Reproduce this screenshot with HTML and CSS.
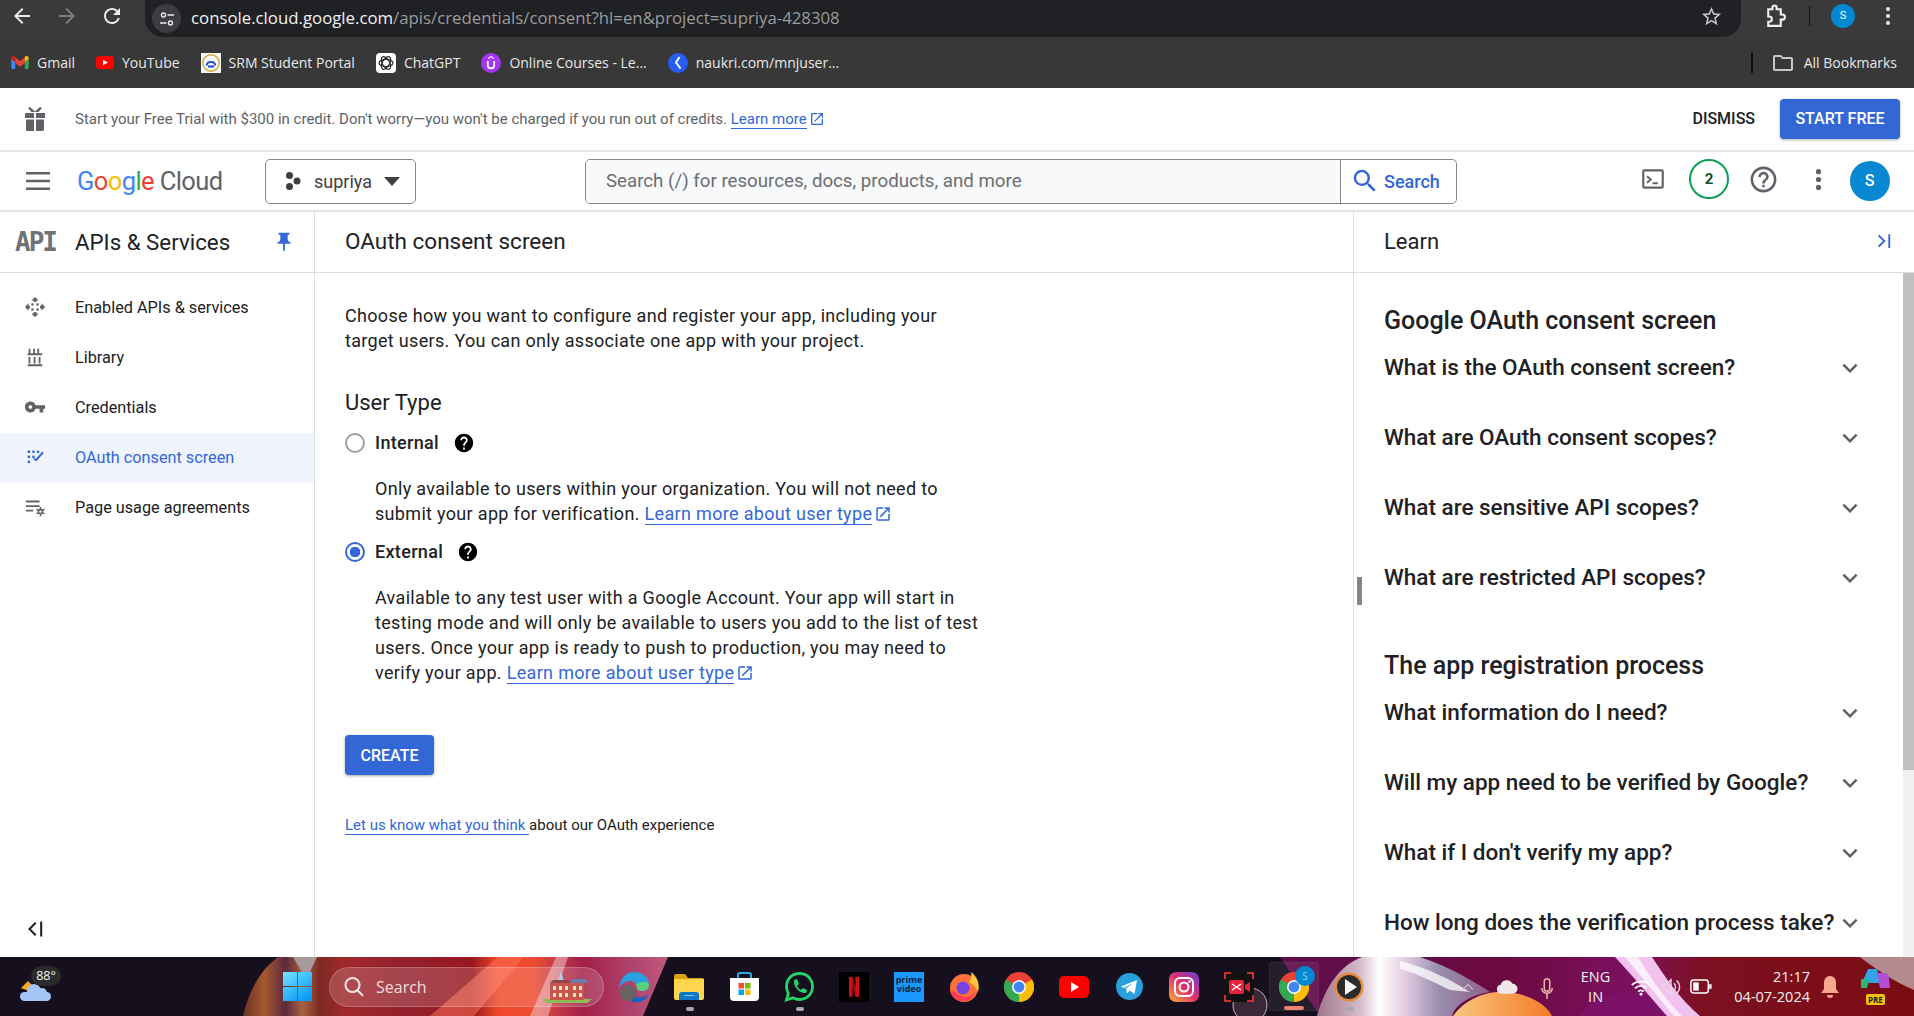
FILE: index.html
```html
<!DOCTYPE html>
<html lang="en">
<head>
    <meta charset="UTF-8">
    <title>OAuth consent screen</title>
    <link rel="stylesheet" href="styles.css">
</head>
<body>
    <!-- browser chrome -->
    <div class="toolbar">
        <svg class="nav-icon nav-first" viewBox="0 0 24 24"><path fill="#e8eaed" d="M20 11H7.83l5.59-5.59L12 4l-8 8 8 8 1.41-1.41L7.83 13H20v-2z"/></svg>
        <svg class="nav-icon" viewBox="0 0 24 24"><path fill="#7d7e80" d="M12 4l-1.41 1.41L16.17 11H4v2h12.17l-5.58 5.59L12 20l8-8z"/></svg>
        <svg class="nav-icon" viewBox="0 0 24 24"><path fill="#e8eaed" d="M17.65 6.35A7.958 7.958 0 0012 4c-4.42 0-7.99 3.58-7.99 8s3.57 8 7.99 8c3.73 0 6.84-2.55 7.73-6h-2.08A5.99 5.99 0 0112 18c-3.31 0-6-2.69-6-6s2.69-6 6-6c1.66 0 3.14.69 4.22 1.78L13 11h7V4l-2.35 2.35z"/></svg>
        <div class="urlbar">
            <span class="site-info">
                <svg viewBox="0 0 16 16" width="16" height="16"><g fill="none" stroke="#e8eaed" stroke-width="1.4"><circle cx="4.5" cy="4" r="2"/><path d="M8.5 4H15M1 12h6.500"/><circle cx="11.5" cy="12" r="2"/></g></svg>
            </span>
            <span class="url"><span class="url-host">console.cloud.google.com</span>/apis/credentials/consent?hl=en&amp;project=supriya-428308</span>
            <svg class="star" viewBox="0 0 24 24"><path fill="#c4c7c5" d="M22 9.24l-7.19-.62L12 2 9.19 8.63 2 9.24l5.46 4.73L5.82 21 12 17.27 18.18 21l-1.63-7.03L22 9.24zM12 15.4l-3.76 2.27 1-4.28-3.32-2.88 4.38-.38L12 6.1l1.71 4.04 4.38.38-3.32 2.88 1 4.28L12 15.4z"/></svg>
        </div>
        <div class="toolbar-right">
            <svg class="ext-icon" viewBox="0 0 24 24"><path fill="none" stroke="#f1f1f1" stroke-width="2" d="M6 5h4V3.500a2 2 0 014 0V5h4v5h1.500a2.500 2.500 0 010 5H18v6H6v-4h1a2.500 2.500 0 000-5H6z"/></svg>
            <span class="toolbar-sep"></span>
            <span class="chrome-avatar">S</span>
            <svg class="chrome-more" viewBox="0 0 24 24"><g fill="#e8eaed"><circle cx="12" cy="5" r="2"/><circle cx="12" cy="12" r="2"/><circle cx="12" cy="19" r="2"/></g></svg>
        </div>
    </div>
    <div class="bookmarks">
        <div class="bm">
            <svg viewBox="0 0 20 15" width="18" height="13"><path fill="#4285f4" d="M0 3v10.500C0 14.300.6 15 1.500 15H4.500V7z"/><path fill="#34a853" d="M15.500 15h3c.9 0 1.500-.7 1.500-1.500V3l-4.500 4z"/><path fill="#ea4335" d="M4.500 8V1.500L10 6l5.500-4.500V8L10 12.500z"/><path fill="#c5221f" d="M0 3.500V2.500C0 .5 2.300-.6 3.900.6L4.500 1.100V7z"/><path fill="#fbbc04" d="M15.500 1.100l.6-.5C17.700-.6 20 .5 20 2.500v1L15.500 7z"/></svg>
            Gmail
        </div>
        <div class="bm">
            <svg viewBox="0 0 18 13" width="18" height="13"><rect width="18" height="13" rx="3.500" fill="#f00"/><path fill="#fff" d="M7 3.800l5 2.700-5 2.700z"/></svg>
            YouTube
        </div>
        <div class="bm">
            <svg viewBox="0 0 20 20" width="20" height="20"><rect width="20" height="20" fill="#f8f8f2"/><circle cx="10" cy="10" r="8.200" fill="none" stroke="#c9a93c" stroke-width="1.400"/><path fill="none" stroke="#1646d8" stroke-width="1.800" d="M5.500 12.500a4.600 4.600 0 019 0M7 13.500h6"/></svg>
            SRM Student Portal
        </div>
        <div class="bm">
            <svg viewBox="0 0 20 20" width="20" height="20"><rect width="20" height="20" rx="4" fill="#fff"/><g fill="none" stroke="#222" stroke-width="1.100"><ellipse cx="10" cy="10" rx="7" ry="3.600"/><ellipse cx="10" cy="10" rx="7" ry="3.600" transform="rotate(60 10 10)"/><ellipse cx="10" cy="10" rx="7" ry="3.600" transform="rotate(-60 10 10)"/></g></svg>
            ChatGPT
        </div>
        <div class="bm">
            <svg viewBox="0 0 20 20" width="20" height="20"><circle cx="10" cy="10" r="10" fill="#a435f0"/><path fill="none" stroke="#fff" stroke-width="1.800" d="M6.800 8v4.200a3.200 3.200 0 006.400 0V8"/><path fill="#fff" d="M10 3l3 2v1.300l-3-2-3 2V5z"/></svg>
            Online Courses - Le...
        </div>
        <div class="bm">
            <svg viewBox="0 0 20 20" width="20" height="20"><circle cx="10" cy="10" r="10" fill="#275df5"/><path fill="none" stroke="#fff" stroke-width="2" d="M11.500 4L8 9.500l4.500 6"/></svg>
            naukri.com/mnjuser...
        </div>
        <div class="all-bookmarks">
            <span class="bm-sep"></span>
            <svg viewBox="0 0 24 24" width="24" height="24"><path fill="#c7c7c7" d="M20 6h-8l-2-2H4c-1.100 0-1.990.9-1.990 2L2 18c0 1.100.9 2 2 2h16c1.100 0 2-.9 2-2V8c0-1.100-.9-2-2-2zm0 12H4V6h5.170l2 2H20v10z"/></svg>
            <span>All Bookmarks</span>
        </div>
    </div>

    <!-- free trial banner -->
    <div class="trial">
        <svg class="gift" viewBox="0 0 22 24"><path fill="#5f6368" d="M1 6h9v5H1zM12 6h9v5h-9zM2 12.500h8V24H3.500A1.500 1.500 0 012 22.500zM12 12.500h8v10a1.500 1.500 0 01-1.500 1.500H12zM4 1l2-1 5 4.500L16 0l2 1-3.500 4h-7z"/></svg>
        <p class="trial-text">Start your Free Trial with $300 in credit. Don't worry—you won't be charged if you run out of credits. <a class="link">Learn more</a><svg class="ext-link small" viewBox="0 0 24 24"><path d="M19 19H5V5h7V3H5a2 2 0 00-2 2v14a2 2 0 002 2h14c1.100 0 2-.9 2-2v-7h-2v7zM14 3v2h3.590l-9.830 9.830 1.410 1.410L19 6.410V10h2V3h-7z"/></svg></p>
        <span class="dismiss">DISMISS</span>
        <button class="btn-primary start-free">START FREE</button>
    </div>

    <!-- console header -->
    <div class="topbar">
        <svg class="menu-icon" viewBox="0 0 24 18"><path fill="#5f6368" d="M0 0h24v2.400H0zM0 7.800h24v2.400H0zM0 15.600h24V18H0z"/></svg>
        <div class="logo"><span class="g-blue">G</span><span class="g-red">o</span><span class="g-yellow">o</span><span class="g-blue">g</span><span class="g-green">l</span><span class="g-red">e</span> <span class="logo-cloud">Cloud</span></div>
        <div class="picker">
            <svg viewBox="0 0 18 20" width="18" height="20"><g fill="#3c4043"><circle cx="5.500" cy="4.500" r="3.500"/><circle cx="13" cy="10" r="3.500"/><circle cx="5.500" cy="15.500" r="3.500"/></g></svg>
            <span>supriya</span>
            <span class="caret"></span>
        </div>
        <div class="search">
            <span class="search-input">Search (/) for resources, docs, products, and more</span>
            <span class="search-btn">
                <svg viewBox="0 0 24 24" width="30" height="30"><path fill="#3367d6" d="M15.500 14h-.79l-.28-.27A6.471 6.471 0 0016 9.500 6.500 6.500 0 109.500 16c1.610 0 3.090-.59 4.230-1.570l.27.280v.79l5 4.990L20.490 19l-4.990-5zm-6 0C7.010 14 5 11.990 5 9.500S7.010 5 9.500 5 14 7.010 14 9.500 11.990 14 9.500 14z"/></svg>
                Search
            </span>
        </div>
        <div class="top-icons">
            <svg class="icon-terminal" viewBox="0 0 24 24"><path fill="#5f6368" d="M20 3H4a2 2 0 00-2 2v14a2 2 0 002 2h16a2 2 0 002-2V5a2 2 0 00-2-2zm0 16H4V5h16v14z"/><path fill="none" stroke="#5f6368" stroke-width="1.800" d="M6.500 9.500l3.500 3-3.500 3M11.500 16h5"/></svg>
            <span class="badge">2</span>
            <svg class="icon-help" viewBox="0 0 24 24"><path fill="#5f6368" d="M11 18h2v-2h-2v2zm1-16C6.480 2 2 6.480 2 12s4.480 10 10 10 10-4.480 10-10S17.520 2 12 2zm0 18c-4.410 0-8-3.590-8-8s3.590-8 8-8 8 3.590 8 8-3.590 8-8 8zm0-14c-2.210 0-4 1.790-4 4h2c0-1.100.9-2 2-2s2 .9 2 2c0 2-3 1.750-3 5h2c0-2.250 3-2.500 3-5 0-2.210-1.790-4-4-4z"/></svg>
            <svg class="icon-more" viewBox="0 0 24 24"><g fill="#5f6368"><circle cx="12" cy="5" r="2.300"/><circle cx="12" cy="12" r="2.300"/><circle cx="12" cy="19" r="2.300"/></g></svg>
            <span class="avatar">S</span>
        </div>
    </div>

    <div class="workspace">
        <!-- left nav -->
        <aside class="sidebar">
            <div class="side-head">
                <span class="api-mark">API</span>
                <span class="side-title">APIs &amp; Services</span>
                <svg class="pin" viewBox="0 0 24 24"><path fill="#3367d6" d="M16 9V4h1c.55 0 1-.45 1-1s-.45-1-1-1H7c-.55 0-1 .45-1 1s.45 1 1 1h1v5c0 1.660-1.340 3-3 3v2h5.970v7l1 1 1-1v-7H19v-2c-1.660 0-3-1.340-3-3z"/></svg>
            </div>
            <nav class="side-nav">
                <a class="side-item">
                    <svg viewBox="0 0 24 24"><g fill="#5f6368"><path d="M12 1l4 4h-2.500v1.500h-3V5H8zM12 23l-4-4h2.500v-1.500h3V19H16zM1 12l4-4v2.500h1.500v3H5V16zM23 12l-4 4v-2.500h-1.500v-3H19V8z"/><rect x="8" y="8" width="2.500" height="2.500"/><rect x="13.500" y="8" width="2.500" height="2.500"/><rect x="8" y="13.500" width="2.500" height="2.500"/><rect x="13.500" y="13.500" width="2.500" height="2.500"/></g></svg>
                    Enabled APIs &amp; services
                </a>
                <a class="side-item">
                    <svg viewBox="0 0 24 24"><path fill="#5f6368" d="M5 3h2v5h3V3h2v5h2.500V3h2v5H20v2H4V8h1zM4 20h16v2H4zM5 12h2v7H5zM10.500 12h2v7h-2zM16 12h2v7h-2z"/></svg>
                    Library
                </a>
                <a class="side-item">
                    <svg viewBox="0 0 24 24"><path fill="#5f6368" d="M12.650 10C11.830 7.670 9.610 6 7 6c-3.310 0-6 2.690-6 6s2.690 6 6 6c2.610 0 4.830-1.670 5.650-4H17v4h4v-4h2v-4H12.650zM7 14c-1.100 0-2-.9-2-2s.9-2 2-2 2 .9 2 2-.9 2-2 2z"/></svg>
                    Credentials
                </a>
                <a class="side-item active">
                    <svg viewBox="0 0 24 24"><g fill="#3367d6"><rect x="4" y="5" width="2.600" height="2.600"/><rect x="9" y="5" width="2.600" height="2.600"/><rect x="14" y="5" width="2.600" height="2.600"/><rect x="4" y="10.500" width="2.600" height="2.600"/><rect x="9" y="10.500" width="2.600" height="2.600"/><rect x="4" y="16" width="2.600" height="2.600"/><path d="M20 6l1.500 1.500-8 9-3.500-2 1-1.500 2 1z"/></g></svg>
                    OAuth consent screen
                </a>
                <a class="side-item">
                    <svg viewBox="0 0 24 24"><g fill="#5f6368"><path d="M2 5h15v2H2zM2 10h15v2H2zM2 15h8v2H2z"/><circle cx="18" cy="17" r="3"/><path fill="none" stroke="#5f6368" stroke-width="1.800" d="M18 12v10M13.700 14.500l8.600 5M13.700 19.500l8.600-5"/></g><circle cx="18" cy="17" r="1.300" fill="#fff"/></svg>
                    Page usage agreements
                </a>
            </nav>
            <svg class="collapse" viewBox="0 0 16 16"><path fill="none" stroke="#202124" stroke-width="1.500" d="M8.500 3.500L4 8l4.500 4.500M12.500 2.500v11"/></svg>
        </aside>

        <!-- main column -->
        <main class="content">
            <div class="page-head">OAuth consent screen</div>
            <div class="page-body">
                <p class="intro">Choose how you want to configure and register your app, including your target users. You can only associate one app with your project.</p>
                <h2 class="section-label">User Type</h2>

                <div class="radio-row">
                    <span class="radio"></span>
                    <span class="radio-label">Internal</span>
                    <svg class="help" viewBox="0 0 24 24"><path d="M12 2C6.480 2 2 6.480 2 12s4.480 10 10 10 10-4.480 10-10S17.520 2 12 2zm1 17h-2v-2h2v2zm2.070-7.750l-.9.920C13.450 12.900 13 13.500 13 15h-2v-.5c0-1.100.450-2.100 1.170-2.830l1.240-1.260c.370-.36.590-.86.590-1.410 0-1.100-.9-2-2-2s-2 .9-2 2H8c0-2.210 1.790-4 4-4s4 1.790 4 4c0 .880-.36 1.680-.93 2.250z"/></svg>
                </div>
                <p class="radio-desc">Only available to users within your organization. You will not need to submit your app for verification. <a class="link">Learn more about user type</a><svg class="ext-link" viewBox="0 0 24 24"><path d="M19 19H5V5h7V3H5a2 2 0 00-2 2v14a2 2 0 002 2h14c1.100 0 2-.9 2-2v-7h-2v7zM14 3v2h3.590l-9.830 9.830 1.410 1.410L19 6.410V10h2V3h-7z"/></svg></p>

                <div class="radio-row">
                    <span class="radio checked"></span>
                    <span class="radio-label">External</span>
                    <svg class="help" viewBox="0 0 24 24"><path d="M12 2C6.480 2 2 6.480 2 12s4.480 10 10 10 10-4.480 10-10S17.520 2 12 2zm1 17h-2v-2h2v2zm2.070-7.750l-.9.920C13.450 12.900 13 13.500 13 15h-2v-.5c0-1.100.450-2.100 1.170-2.830l1.240-1.260c.370-.36.590-.86.590-1.410 0-1.100-.9-2-2-2s-2 .9-2 2H8c0-2.210 1.790-4 4-4s4 1.790 4 4c0 .880-.36 1.680-.93 2.250z"/></svg>
                </div>
                <p class="radio-desc">Available to any test user with a Google Account. Your app will start in testing mode and will only be available to users you add to the list of test users. Once your app is ready to push to production, you may need to verify your app. <a class="link">Learn more about user type</a><svg class="ext-link" viewBox="0 0 24 24"><path d="M19 19H5V5h7V3H5a2 2 0 00-2 2v14a2 2 0 002 2h14c1.100 0 2-.9 2-2v-7h-2v7zM14 3v2h3.590l-9.830 9.830 1.410 1.410L19 6.410V10h2V3h-7z"/></svg></p>

                <button class="btn-primary create">CREATE</button>
                <p class="feedback"><a class="link">Let us know what you think </a>about our OAuth experience</p>
            </div>
        </main>

        <!-- learn panel -->
        <aside class="learn">
            <span class="drag-handle"></span>
            <div class="learn-head">
                <span>Learn</span>
                <svg viewBox="0 0 16 16" width="20" height="20"><path fill="none" stroke="#3367d6" stroke-width="1.500" d="M4.500 3.500L9 8l-4.500 4.500M13 2.500v11"/></svg>
            </div>
            <div class="learn-scroll">
                <div class="learn-body">
                    <h3 class="learn-title">Google OAuth consent screen</h3>
                    <div class="faq">What is the OAuth consent screen?<svg viewBox="0 0 24 24"><path d="M16.590 8.590L12 13.170 7.410 8.590 6 10l6 6 6-6z"/></svg></div>
                    <div class="faq">What are OAuth consent scopes?<svg viewBox="0 0 24 24"><path d="M16.590 8.590L12 13.170 7.410 8.590 6 10l6 6 6-6z"/></svg></div>
                    <div class="faq">What are sensitive API scopes?<svg viewBox="0 0 24 24"><path d="M16.590 8.590L12 13.170 7.410 8.590 6 10l6 6 6-6z"/></svg></div>
                    <div class="faq">What are restricted API scopes?<svg viewBox="0 0 24 24"><path d="M16.590 8.590L12 13.170 7.410 8.590 6 10l6 6 6-6z"/></svg></div>
                    <h3 class="learn-title second">The app registration process</h3>
                    <div class="faq">What information do I need?<svg viewBox="0 0 24 24"><path d="M16.590 8.590L12 13.170 7.410 8.590 6 10l6 6 6-6z"/></svg></div>
                    <div class="faq">Will my app need to be verified by Google?<svg viewBox="0 0 24 24"><path d="M16.590 8.590L12 13.170 7.410 8.590 6 10l6 6 6-6z"/></svg></div>
                    <div class="faq">What if I don't verify my app?<svg viewBox="0 0 24 24"><path d="M16.590 8.590L12 13.170 7.410 8.590 6 10l6 6 6-6z"/></svg></div>
                    <div class="faq">How long does the verification process take?<svg viewBox="0 0 24 24"><path d="M16.590 8.590L12 13.170 7.410 8.590 6 10l6 6 6-6z"/></svg></div>
                </div>
                <div class="scrollbar"><span class="scroll-thumb"></span></div>
            </div>
        </aside>
    </div>

    <!-- windows taskbar -->
    <footer class="taskbar">
        <svg class="wallpaper" viewBox="0 0 1914 59">
            <defs>
                <linearGradient id="redwall" gradientUnits="userSpaceOnUse" x1="243" y1="0" x2="668" y2="0">
                    <stop offset="0" stop-color="#6a3220"/>
                    <stop offset=".05" stop-color="#a5572f"/>
                    <stop offset=".1" stop-color="#5c2a3d"/>
                    <stop offset=".14" stop-color="#a8623f"/>
                    <stop offset=".18" stop-color="#7d2a24"/>
                    <stop offset=".24" stop-color="#a0282c"/>
                    <stop offset=".38" stop-color="#93202c"/>
                    <stop offset=".54" stop-color="#991820"/>
                    <stop offset=".6" stop-color="#f0482a"/>
                    <stop offset=".68" stop-color="#ee4c30"/>
                    <stop offset=".74" stop-color="#c23a48"/>
                    <stop offset=".8" stop-color="#a21f48"/>
                    <stop offset=".9" stop-color="#ad3f68"/>
                    <stop offset="1" stop-color="#bf5a80"/>
                </linearGradient>
                <linearGradient id="traywall" gradientUnits="userSpaceOnUse" x1="1280" y1="0" x2="1914" y2="0">
                    <stop offset="0" stop-color="#5e0e4c"/>
                    <stop offset=".35" stop-color="#6b0a3f"/>
                    <stop offset=".55" stop-color="#7c1060"/>
                    <stop offset=".67" stop-color="#7d1020"/>
                    <stop offset="1" stop-color="#7a0c12"/>
                </linearGradient>
                <linearGradient id="pearl" gradientUnits="userSpaceOnUse" x1="1317" y1="0" x2="1490" y2="0">
                    <stop offset="0" stop-color="#9e7688"/>
                    <stop offset=".25" stop-color="#d5bccb"/>
                    <stop offset=".36" stop-color="#fff"/>
                    <stop offset=".5" stop-color="#e8cfe4"/>
                    <stop offset=".7" stop-color="#9a8fb0"/>
                    <stop offset="1" stop-color="#8d5f8a"/>
                </linearGradient>
                <linearGradient id="dome" x1="0" y1="0" x2="1" y2="0">
                    <stop offset="0" stop-color="#f8c67e"/>
                    <stop offset="1" stop-color="#f37a2a"/>
                </linearGradient>
                <linearGradient id="startblue" gradientUnits="userSpaceOnUse" x1="0" y1="0" x2="20" y2="29">
                    <stop offset="0" stop-color="#72e4ff"/>
                    <stop offset="1" stop-color="#0c9af5"/>
                </linearGradient>
                <linearGradient id="insta" x1="0" y1="1" x2="1" y2="0">
                    <stop offset="0" stop-color="#fbb03b"/>
                    <stop offset=".5" stop-color="#e1306c"/>
                    <stop offset="1" stop-color="#6a3fd7"/>
                </linearGradient>
            </defs>
            <path fill="url(#redwall)" d="M243 59C250 30 262 12 278 0H668L643 59z"/>
            <path fill="#ff7058" opacity=".55" d="M430 59L498 0h26L474 59z"/>
            <path fill="#f0c4c8" opacity=".55" d="M530 59L556 0h12L548 59z"/>
            <path fill="#a89a9a" d="M293 0h24l-8 17h-6z"/>
            <path fill="url(#traywall)" d="M1280 0L1320 59H1914V0z"/>
            <path fill="url(#pearl)" d="M1317 59C1325 30 1340 8 1362 0H1420C1450 10 1475 25 1490 35 1470 38 1455 48 1452 59z"/>
            <path fill="#fff" opacity=".75" d="M1400 4C1425 10 1450 22 1470 35L1450 33C1432 24 1415 16 1400 12z"/>
            <path fill="url(#dome)" d="M1453 59C1465 42 1485 35 1500 35 1525 35 1545 45 1552 59z"/>
            <path fill="#7c1268" d="M1580 59C1590 42 1610 35 1630 35 1660 35 1680 45 1695 59z"/>
            <path fill="#f1c2ee" d="M1615 0H1652C1665 20 1680 42 1700 59H1667C1650 40 1632 18 1615 0z"/>
            <path fill="#fff" opacity=".7" d="M1625 0H1638C1650 20 1665 42 1682 59H1674C1658 40 1640 18 1625 0z"/>
            <path fill="#b58a8e" d="M1860 0H1914V33C1895 25 1875 12 1860 0z"/>
            <circle cx="1250" cy="48" r="17" fill="#3a2838" stroke="#c9b7c4"/>
        </svg>
        <div class="weather">
            <svg viewBox="0 0 32 21" width="32" height="21"><path fill="#f7a823" d="M1 8l7-7 5 5-4 5z"/><g fill="#a4c6f6"><rect y="12" width="31" height="9" rx="4.500"/><circle cx="14" cy="11" r="7"/><circle cx="22" cy="13" r="5"/></g></svg>
            <span class="temp">88°</span>
        </div>
        <div class="task-apps">
            <span class="app"><svg viewBox="0 0 29 29" width="29" height="29"><g fill="url(#startblue)"><rect width="14" height="14"/><rect x="15" width="14" height="14"/><rect y="15" width="14" height="14"/><rect x="15" y="15" width="14" height="14"/></g></svg></span>
            <div class="task-search">
                <svg viewBox="0 0 24 24" width="24" height="24"><path fill="#f2e4e4" d="M10.500 2a8 8 0 016.200 13l5 5-1.400 1.400-5-5A8 8 0 1110.500 2zm0 2a6 6 0 100 12 6 6 0 000-12z"/></svg>
                <span>Search</span>
                <svg viewBox="0 0 50 32" width="50" height="32"><path fill="#8dbb55" d="M0 28h50l-5 4H5z"/><rect x="8" y="12" width="34" height="17" fill="#c9554c"/><path fill="#6b7ab0" d="M28 12l2-4h14l2 4z"/><path fill="#8c4a4a" d="M8 12l3-3h16l2 3z"/><path fill="#b9c8ea" d="M19 0l2.500 9h-5z"/><g fill="#f2dfc6"><rect x="11" y="15" width="3" height="4"/><rect x="17" y="15" width="3" height="4"/><rect x="23" y="15" width="3" height="4"/><rect x="31" y="15" width="3" height="4"/><rect x="37" y="15" width="3" height="4"/><rect x="11" y="22" width="3" height="4"/><rect x="17" y="22" width="3" height="4"/><rect x="23" y="22" width="3" height="4"/><rect x="31" y="22" width="3" height="4"/><rect x="37" y="22" width="3" height="4"/></g></svg>
            </div>
            <span class="app"><svg viewBox="0 0 30 30" width="30" height="30"><path fill="#2a9fe0" d="M15 0c9 0 15 6 15 13 0 4-3 6-7 6-3 0-5-1-5-3 0-4-3-7-6-7-6 0-10 3-12 8C1 6 7 0 15 0z"/><path fill="#56d27a" d="M30 13c0 4-3 6-7 6-3 0-5-1-5-3 0-2-1-3-1-4 6-3 13-3 13 1z"/><path fill="#1363c6" d="M12 30c8 2 14-1 17-7-5 3-10 3-14 1-2 2-3 4-3 6z"/><circle cx="9" cy="21" r="8" fill="#6a6460"/></svg></span>
            <span class="app running"><svg viewBox="0 0 30 26" width="30" height="26"><path fill="#dba40c" d="M0 2a2 2 0 012-2h9l3 4h14a2 2 0 012 2v4H0z"/><path fill="#fdd54f" d="M0 5h30v19a2 2 0 01-2 2H2a2 2 0 01-2-2z"/><path fill="#0d78c8" d="M5 26v-5a3 3 0 013-3h14a3 3 0 013 3v5z"/><rect x="10" y="21" width="10" height="1" fill="#7fc4ee"/></svg></span>
            <span class="app"><svg viewBox="0 0 29 29" width="29" height="29"><path fill="#fff" d="M0 6h29v19a4 4 0 01-4 4H4a4 4 0 01-4-4z"/><path fill="none" stroke="#2ea8e0" stroke-width="2" d="M8 6V3a2 2 0 012-2h9a2 2 0 012 2v3"/><rect x="8.500" y="11" width="5.500" height="5.500" fill="#f25022"/><rect x="15" y="11" width="5.500" height="5.500" fill="#7fba00"/><rect x="8.500" y="17.500" width="5.500" height="5.500" fill="#00a4ef"/><rect x="15" y="17.500" width="5.500" height="5.500" fill="#ffb900"/></svg></span>
            <span class="app running"><svg viewBox="0 0 30 30" width="30" height="30"><path fill="none" stroke="#25d366" stroke-width="2.800" d="M15.500 1.500c7.500 0 13 5.500 13 13s-5.500 13-13 13c-2.500 0-4.500-.6-6.500-1.700l-6.500 2 1.800-6.300c-1.100-2-1.800-4.500-1.800-7 0-7.500 5.500-13 13-13z"/><path fill="#25d366" d="M10 8l3-1 2 5-2 2c1 2 2 3 4 4l2-2 4 2-1 3c-6 1-13-6-12-13z"/></svg></span>
            <span class="app"><svg viewBox="0 0 30 30" width="30" height="30"><rect width="30" height="30" fill="#000"/><path fill="#7f0a10" d="M10 5h3.500l6.500 20h-3.500z"/><path fill="#d40a14" d="M10 5h3.500v19.500L10 25zM16.500 5H20v20l-3.500-.5z"/></svg></span>
            <span class="app"><div class="prime">prime<br>video</div></span>
            <span class="app"><svg viewBox="0 0 30 30" width="30" height="30"><circle cx="15" cy="16" r="14" fill="#ff7139"/><path fill="#ffc93a" d="M22 0c7 5 9 13 7 20-2-5-5-8-9-10 2-3 3-6 2-10z"/><circle cx="14" cy="16" r="6.500" fill="#7542e5"/><path fill="#ff3d54" d="M1 19c2 8 9 11 15 10s10-5 10-9c-3 5-9 6-14 4S4 17 1 19z"/></svg></span>
            <span class="app"><svg viewBox="0 0 32 32" width="30" height="30"><use href="#chrome-mark"/></svg></span>
            <span class="app"><svg viewBox="0 0 30 22" width="30" height="22"><rect width="30" height="22" rx="5" fill="#f00"/><path fill="#fff" d="M12 6l8 5-8 5z"/></svg></span>
            <span class="app"><svg viewBox="0 0 27 27" width="27" height="27"><circle cx="13.500" cy="13.500" r="13.500" fill="#29a0da"/><path fill="#fff" d="M5 13.500l16-6.500-2.500 14-5-3.500-2.500 3-1-5 7-5.500-9 5z"/></svg></span>
            <span class="app"><svg viewBox="0 0 30 30" width="30" height="30"><rect width="30" height="30" rx="7" fill="url(#insta)"/><rect x="6" y="6" width="18" height="18" rx="5" fill="none" stroke="#fff" stroke-width="2"/><circle cx="15" cy="15" r="4.500" fill="none" stroke="#fff" stroke-width="2"/><circle cx="20.500" cy="9.500" r="1.200" fill="#fff"/></svg></span>
            <span class="app"><svg viewBox="0 0 30 30" width="30" height="30"><rect width="30" height="30" rx="4" fill="#111"/><g fill="none" stroke="#ff3b30" stroke-width="1.600"><path d="M1 7V1h6M23 1h6v6M29 23v6h-6M7 29H1v-6"/></g><rect x="5" y="8" width="15" height="14" rx="2" fill="#e5243b"/><path fill="#e5243b" d="M21 13l5-3v10l-5-3z"/><path fill="none" stroke="#fff" stroke-width="1.400" d="M8 18l9-6M8 12l9 6"/></svg></span>
            <span class="app current">
                <svg viewBox="0 0 32 32" width="30" height="30"><use href="#chrome-mark"/></svg>
                <span class="profile-dot">S</span>
            </span>
            <span class="app running"><svg viewBox="0 0 30 30" width="30" height="30"><circle cx="15" cy="15" r="14.500" fill="#e78a3c"/><circle cx="15" cy="15" r="12" fill="#2b2b2b"/><path fill="#f4f4f4" d="M11 7l12 8-12 8z"/></svg></span>
        </div>
        <div class="tray">
            <svg class="tray-caret" viewBox="0 0 20 20" width="16" height="16"><path fill="none" stroke="#d9b8c6" stroke-width="1.500" d="M4 13l6-6 6 6"/></svg>
            <svg class="tray-cloud" viewBox="0 0 24 16" width="22" height="15"><path fill="#efe7ec" d="M6 16a5 5 0 01-1-9.900A7 7 0 0118 5a5.500 5.500 0 010 11z"/></svg>
            <svg class="tray-mic" viewBox="0 0 24 24" width="24" height="24"><path fill="#eab3a6" d="M12 1a3.500 3.500 0 013.500 3.500v7a3.500 3.500 0 01-7 0v-7A3.500 3.500 0 0112 1zm0 1.500a2 2 0 00-2 2v7a2 2 0 004 0v-7a2 2 0 00-2-2zM6 11h1.500a4.500 4.500 0 009 0H18a6 6 0 01-5.200 5.900V22h-1.600v-5.100A6 6 0 016 11z"/></svg>
            <span class="lang">ENG<br>IN</span>
            <svg class="tray-wifi" viewBox="0 0 24 24" width="22" height="22"><g fill="none" stroke="#fff" stroke-width="2"><path d="M2 10a14 14 0 0120 0M5.500 13.500a9 9 0 0113 0M9 17a4 4 0 016 0"/></g><circle cx="12" cy="20" r="1.600" fill="#fff"/></svg>
            <svg class="tray-vol" viewBox="0 0 24 24" width="22" height="22"><g fill="none" stroke="#f0d8e2" stroke-width="1.500"><path d="M3 9v6h4l5 5V4L7 9z"/><path d="M15 8a5 5 0 010 8M18 5a9 9 0 010 14"/></g></svg>
            <svg class="tray-batt" viewBox="0 0 24 16" width="22" height="15"><rect x="1" y="1" width="19" height="14" rx="3" fill="none" stroke="#fff" stroke-width="1.600"/><rect x="3.500" y="3.500" width="6" height="9" fill="#fff"/><rect x="21" y="5.500" width="2.500" height="5" fill="#fff"/></svg>
            <div class="clock"><span>21:17</span><span>04-07-2024</span></div>
            <svg class="tray-bell" viewBox="0 0 20 24" width="20" height="24"><path fill="#f8a78c" d="M10 1c4 0 6 3 6 7v6l3 4H1l3-4V8c0-4 2-7 6-7zM7 20h6a3 3 0 01-6 0z"/></svg>
            <div class="copilot">
                <svg viewBox="0 0 30 26" width="30" height="26"><path fill="#33a3e8" d="M8 0h9l3 14H2z"/><path fill="#b14fd6" d="M17 4h8c3 0 4 3 4 6l1 9H20z"/><path fill="#2bb673" d="M1 10h8L7 19H1z"/></svg>
                <span class="pre">PRE</span>
            </div>
        </div>
    </footer>

    <!-- shared chrome logo -->
    <svg class="sprite" viewBox="0 0 32 32">
        <defs>
            <g id="chrome-mark">
                <circle cx="16" cy="16" r="16" fill="#ea4335"/>
                <path fill="#fbbc04" d="M16 16l13.900-8A16 16 0 0116 32z"/>
                <path fill="#34a853" d="M16 16L16 32A16 16 0 012.100 8z"/>
                <circle cx="16" cy="16" r="7.400" fill="#fff"/>
                <circle cx="16" cy="16" r="5.800" fill="#4285f4"/>
            </g>
        </defs>
    </svg>
</body>
</html>
```

FILE: styles.css
```css
/* page */
* {
    box-sizing: border-box;
}

body {
    margin: 0;
    height: 100vh;
    display: flex;
    flex-direction: column;
    overflow: hidden;
    background-color: #fff;
    color: #202124;
    font-family: Roboto, "Liberation Sans", sans-serif;
}

p, h2, h3 {
    margin: 0;
    font-weight: 400;
}

.link {
    color: #3367d6;
    border-bottom: 1px solid #3367d6;
}

.ext-link {
    width: 18px;
    height: 18px;
    margin-left: 2px;
    vertical-align: -3px;
    fill: #3367d6;
}

.ext-link.small {
    width: 16px;
    height: 16px;
}

.btn-primary {
    height: 40px;
    border: none;
    border-radius: 4px;
    background-color: #3367d6;
    color: #fff;
    font-family: Roboto, sans-serif;
    font-size: 16px;
    font-weight: 500;
    box-shadow: 0 1px 3px rgba(60, 64, 67, .45);
}

/* browser toolbar */
.toolbar {
    flex: 0 0 37px;
    display: flex;
    align-items: flex-start;
    background-color: #3a3a3a;
}

.nav-icon {
    width: 24px;
    height: 24px;
    margin: 4px 0 0 21px;
}

.nav-first {
    margin-left: 10px;
}

.urlbar {
    width: 1596px;
    height: 37px;
    margin-left: 21px;
    padding-left: 7px;
    display: flex;
    align-items: center;
    border-radius: 0 0 18px 18px;
    background-color: #202124;
}

.site-info {
    width: 29px;
    height: 29px;
    display: flex;
    align-items: center;
    justify-content: center;
    border-radius: 50%;
    background-color: #3c3d41;
}

.url {
    flex: 1;
    margin: 0 0 3px 10px;
    color: #9a9b9d;
    font-family: "Open Sans", sans-serif;
    font-size: 16.8px;
}

.url-host {
    color: #f1f1f1;
}

.star {
    width: 23px;
    height: 23px;
    margin: 0 18px 5px 0;
}

.toolbar-right {
    display: flex;
    align-items: center;
    height: 32px;
}

.ext-icon {
    width: 25px;
    height: 25px;
    margin-left: 21px;
}

.toolbar-sep {
    width: 1px;
    height: 20px;
    margin-left: 22px;
    background-color: #111;
}

.chrome-avatar {
    width: 24px;
    height: 24px;
    margin-left: 21px;
    border-radius: 50%;
    background-color: #0288d1;
    color: #fff;
    font-size: 11px;
    line-height: 24px;
    text-align: center;
}

.chrome-more {
    width: 24px;
    height: 24px;
    margin-left: 21px;
}

/* bookmarks */
.bookmarks {
    flex: 0 0 51px;
    display: flex;
    align-items: center;
    gap: 21px;
    padding: 0 17px 0 11px;
    background-color: #383838;
    color: #e8e8e8;
    font-family: "Open Sans", sans-serif;
    font-size: 14px;
}

.bm {
    display: flex;
    align-items: center;
    gap: 8px;
}

.all-bookmarks {
    margin-left: auto;
    display: flex;
    align-items: center;
    gap: 9px;
}

.bm-sep {
    width: 2px;
    height: 20px;
    margin-right: 9px;
    background-color: #0c0c0c;
}

/* free trial */
.trial {
    flex: 0 0 64px;
    display: flex;
    align-items: center;
    padding: 0 14px 1px 24px;
    border-bottom: 2px solid #e3e5e7;
}

.gift {
    width: 22px;
    height: 24px;
}

.trial-text {
    flex: 1;
    margin-left: 29px;
    color: #5f6368;
    font-size: 15px;
}

.dismiss {
    margin-right: 25px;
    font-size: 16px;
    font-weight: 500;
    color: #202124;
}

.start-free {
    width: 120px;
}

/* console header */
.topbar {
    flex: 0 0 60px;
    display: flex;
    align-items: center;
    padding-left: 26px;
    border-bottom: 2px solid #e3e5e7;
}

.menu-icon {
    width: 24px;
    height: 18px;
}

.logo {
    width: 145px;
    margin-left: 27px;
    font-size: 25.5px;
    letter-spacing: -.6px;
    white-space: nowrap;
}

.g-blue { color: #4285f4; }
.g-red { color: #ea4335; }
.g-yellow { color: #fbbc04; }
.g-green { color: #34a853; }
.logo-cloud { color: #5f6368; }

.picker {
    width: 151px;
    height: 45px;
    margin-left: 43px;
    padding-left: 18px;
    display: flex;
    align-items: center;
    gap: 12px;
    border: 1px solid #80868b;
    border-radius: 5px;
    color: #3c4043;
    font-size: 18px;
}

.caret {
    width: 0;
    height: 0;
    border-style: solid;
    border-width: 9px 8px 0;
    border-color: #3c4043 transparent transparent;
}

.search {
    width: 872px;
    height: 45px;
    margin-left: 169px;
    display: flex;
    border: 1px solid #80868b;
    border-radius: 5px;
    overflow: hidden;
}

.search-input {
    flex: 1;
    padding-left: 20px;
    display: flex;
    align-items: center;
    background-color: #f8f9fa;
    border-right: 1px solid #80868b;
    color: #6b6e72;
    font-size: 18.7px;
}

.search-btn {
    width: 115px;
    display: flex;
    align-items: center;
    gap: 4px;
    padding-left: 9px;
    color: #3367d6;
    font-size: 18px;
    font-weight: 500;
}

.top-icons {
    flex: 1;
    align-self: stretch;
    display: flex;
    align-items: center;
    padding: 0 0 4px 183px;
}

.icon-terminal {
    width: 26px;
    height: 26px;
}

.badge {
    width: 40px;
    height: 40px;
    margin-left: 23px;
    border: 2px solid #0f9d58;
    border-radius: 50%;
    color: #14532d;
    font-size: 15px;
    font-weight: 700;
    line-height: 36px;
    text-align: center;
}

.icon-help {
    width: 31px;
    height: 31px;
    margin-left: 18.5px;
}

.icon-more {
    width: 27px;
    height: 27px;
    margin-left: 26px;
}

.avatar {
    width: 40px;
    height: 40px;
    margin: 4px 0 0 18px;
    border-radius: 50%;
    background-color: #0788d1;
    color: #fff;
    font-size: 16px;
    font-weight: 500;
    line-height: 40px;
    text-align: center;
}

/* three panels */
.workspace {
    flex: 1;
    min-height: 0;
    display: flex;
}

.sidebar {
    position: relative;
    flex: 0 0 315px;
    border-right: 1px solid #dadce0;
}

.side-head {
    height: 61px;
    display: flex;
    align-items: center;
    padding-left: 15px;
    border-bottom: 1px solid #dadce0;
}

.api-mark {
    width: 60px;
    color: #6f7377;
    font-family: "DejaVu Sans Mono", monospace;
    font-size: 26px;
    font-weight: 700;
    letter-spacing: -2px;
}

.side-title {
    flex: 1;
    font-size: 22.3px;
}

.pin {
    width: 22px;
    height: 22px;
    margin-right: 19px;
}

.side-nav {
    padding-top: 10px;
}

.side-item {
    height: 50px;
    display: flex;
    align-items: center;
    gap: 28px;
    padding: 0 0 2px 23px;
    font-size: 16.25px;
}

.side-item svg {
    width: 22px;
    height: 22px;
    flex: none;
    margin: 0 1px;
}

.side-item.active {
    background-color: #f0f4fd;
    color: #3367d6;
}

.collapse {
    position: absolute;
    left: 24px;
    bottom: 17px;
    width: 22px;
    height: 22px;
}

.content {
    flex: 1;
    min-width: 0;
}

.page-head {
    height: 61px;
    display: flex;
    align-items: center;
    padding: 0 0 2px 30px;
    border-bottom: 1px solid #dadce0;
    font-size: 22.5px;
}

.page-body {
    padding: 30px 0 0 30px;
    font-size: 18px;
    letter-spacing: .32px;
    line-height: 25px;
}

.intro {
    width: 610px;
}

.section-label {
    margin-top: 35px;
    font-size: 22px;
    letter-spacing: 0;
    line-height: 30px;
}

.radio-row {
    display: flex;
    align-items: center;
    height: 25px;
    margin-top: 12px;
}

.radio {
    width: 20px;
    height: 20px;
    margin-right: 10px;
    border: 2px solid #9aa0a6;
    border-radius: 50%;
}

.radio.checked {
    border-color: #3367d6;
    background: radial-gradient(circle, #3367d6 0 5px, #fff 5.5px);
}

.radio-label {
    font-weight: 500;
}

.help {
    width: 22px;
    height: 22px;
    margin-left: 14px;
    fill: #000;
}

.radio-desc {
    width: 610px;
    margin: 21px 0 0 30px;
}

.radio-desc + .radio-row {
    margin-top: 13px;
}

.create {
    display: block;
    width: 89px;
    margin-top: 50px;
    letter-spacing: 0;
}

.feedback {
    margin-top: 38px;
    font-size: 15px;
    letter-spacing: 0;
}

/* learn panel */
.learn {
    position: relative;
    flex: 0 0 561px;
    display: flex;
    flex-direction: column;
    border-left: 1px solid #dadce0;
    min-height: 0;
}

.drag-handle {
    position: absolute;
    left: 3px;
    top: 365px;
    width: 5px;
    height: 28px;
    background-color: #80868b;
}

.learn-head {
    flex: 0 0 61px;
    display: flex;
    align-items: center;
    justify-content: space-between;
    padding: 0 21px 2px 30px;
    border-bottom: 1px solid #dadce0;
    font-size: 22px;
}

.learn-scroll {
    flex: 1;
    display: flex;
    min-height: 0;
    overflow: hidden;
}

.learn-body {
    flex: 1;
    padding: 31px 38px 0 30px;
}

.learn-title {
    font-size: 25px;
    font-weight: 500;
    line-height: 34px;
}

.learn-title.second {
    margin-top: 31px;
}

.faq {
    height: 70px;
    display: flex;
    align-items: flex-start;
    justify-content: space-between;
    padding-top: 15px;
    font-size: 22.5px;
    font-weight: 500;
    line-height: 28px;
    white-space: nowrap;
}

.faq svg {
    width: 30px;
    height: 30px;
    flex: none;
    fill: #5f6368;
}

.scrollbar {
    width: 11px;
    background-color: #f1f1f1;
}

.scroll-thumb {
    display: block;
    height: 497px;
    background-color: #c1c1c1;
}

/* taskbar */
.taskbar {
    position: relative;
    flex: 0 0 59px;
    display: flex;
    align-items: center;
    background-color: #150f1e;
    color: #f2f2f2;
    font-family: "Open Sans", sans-serif;
}

.wallpaper {
    position: absolute;
    left: 0;
    top: 0;
    width: 1914px;
    height: 59px;
}

.weather {
    position: relative;
    width: 270px;
    height: 59px;
    padding: 23px 0 0 20px;
}

.temp {
    position: absolute;
    left: 31px;
    top: 9px;
    width: 30px;
    height: 20px;
    border-radius: 10px;
    background-color: #2b2b2b;
    font-size: 12.5px;
    line-height: 20px;
    text-align: center;
}

.task-apps {
    position: relative;
    display: flex;
    align-items: center;
}

.app {
    position: relative;
    width: 55px;
    height: 59px;
    display: flex;
    align-items: center;
    justify-content: center;
}

.app.running::after {
    content: "";
    position: absolute;
    left: 24px;
    bottom: 5px;
    width: 8px;
    height: 4px;
    border-radius: 2px;
    background-color: #a9a9a9;
}

.app.current {
    width: 50px;
    height: 49px;
    margin: 0 2.5px;
    border: 1px solid rgba(255, 255, 255, .05);
    border-radius: 4px;
    background-color: rgba(255, 255, 255, .07);
}

.app.current::after {
    content: "";
    position: absolute;
    left: 14px;
    bottom: 0;
    width: 20px;
    height: 4px;
    border-radius: 2px;
    background-color: #f08070;
}

.profile-dot {
    position: absolute;
    left: 25px;
    top: 3px;
    width: 20px;
    height: 20px;
    border-radius: 50%;
    background-color: #0288d1;
    color: #8fcdf0;
    font-size: 10px;
    line-height: 20px;
    text-align: center;
}

.task-search {
    width: 275px;
    height: 40px;
    margin: 0 2.5px 0 4px;
    display: flex;
    align-items: center;
    gap: 10px;
    padding: 0 11px 0 12px;
    border: 1px solid rgba(255, 255, 255, .2);
    border-radius: 20px;
    background-color: rgba(255, 255, 255, .16);
    color: #f5dcdc;
    font-size: 16px;
}

.task-search span {
    flex: 1;
}

.prime {
    width: 30px;
    height: 30px;
    padding-top: 3px;
    background-color: #1a98ff;
    color: #06243f;
    font-size: 9px;
    font-weight: 700;
    line-height: 9px;
    text-align: center;
}

.tray {
    position: relative;
    flex: 1;
    display: flex;
    align-items: center;
    justify-content: flex-end;
    padding-right: 24px;
    font-size: 14.5px;
}

.tray-cloud { margin-left: 20px; }
.tray-mic { margin-left: 17px; margin-top: 4px; }
.tray-wifi { margin-left: 20px; }
.tray-vol { margin-left: 8px; }
.tray-batt { margin-left: 8px; }
.tray-bell { margin-left: 10px; }

.lang {
    margin-left: 22px;
    line-height: 20px;
    text-align: center;
}

.clock {
    margin-left: 22px;
    display: flex;
    flex-direction: column;
    align-items: flex-end;
    line-height: 20px;
}

.copilot {
    position: relative;
    width: 30px;
    height: 36px;
    margin-left: 20px;
}

.pre {
    position: absolute;
    left: 6px;
    bottom: 0;
    padding: 0 2px;
    border-radius: 2px;
    background-color: #f4c20d;
    color: #222;
    font-size: 8px;
    font-weight: 700;
    line-height: 11px;
}

.sprite {
    position: absolute;
    width: 0;
    height: 0;
}
```
